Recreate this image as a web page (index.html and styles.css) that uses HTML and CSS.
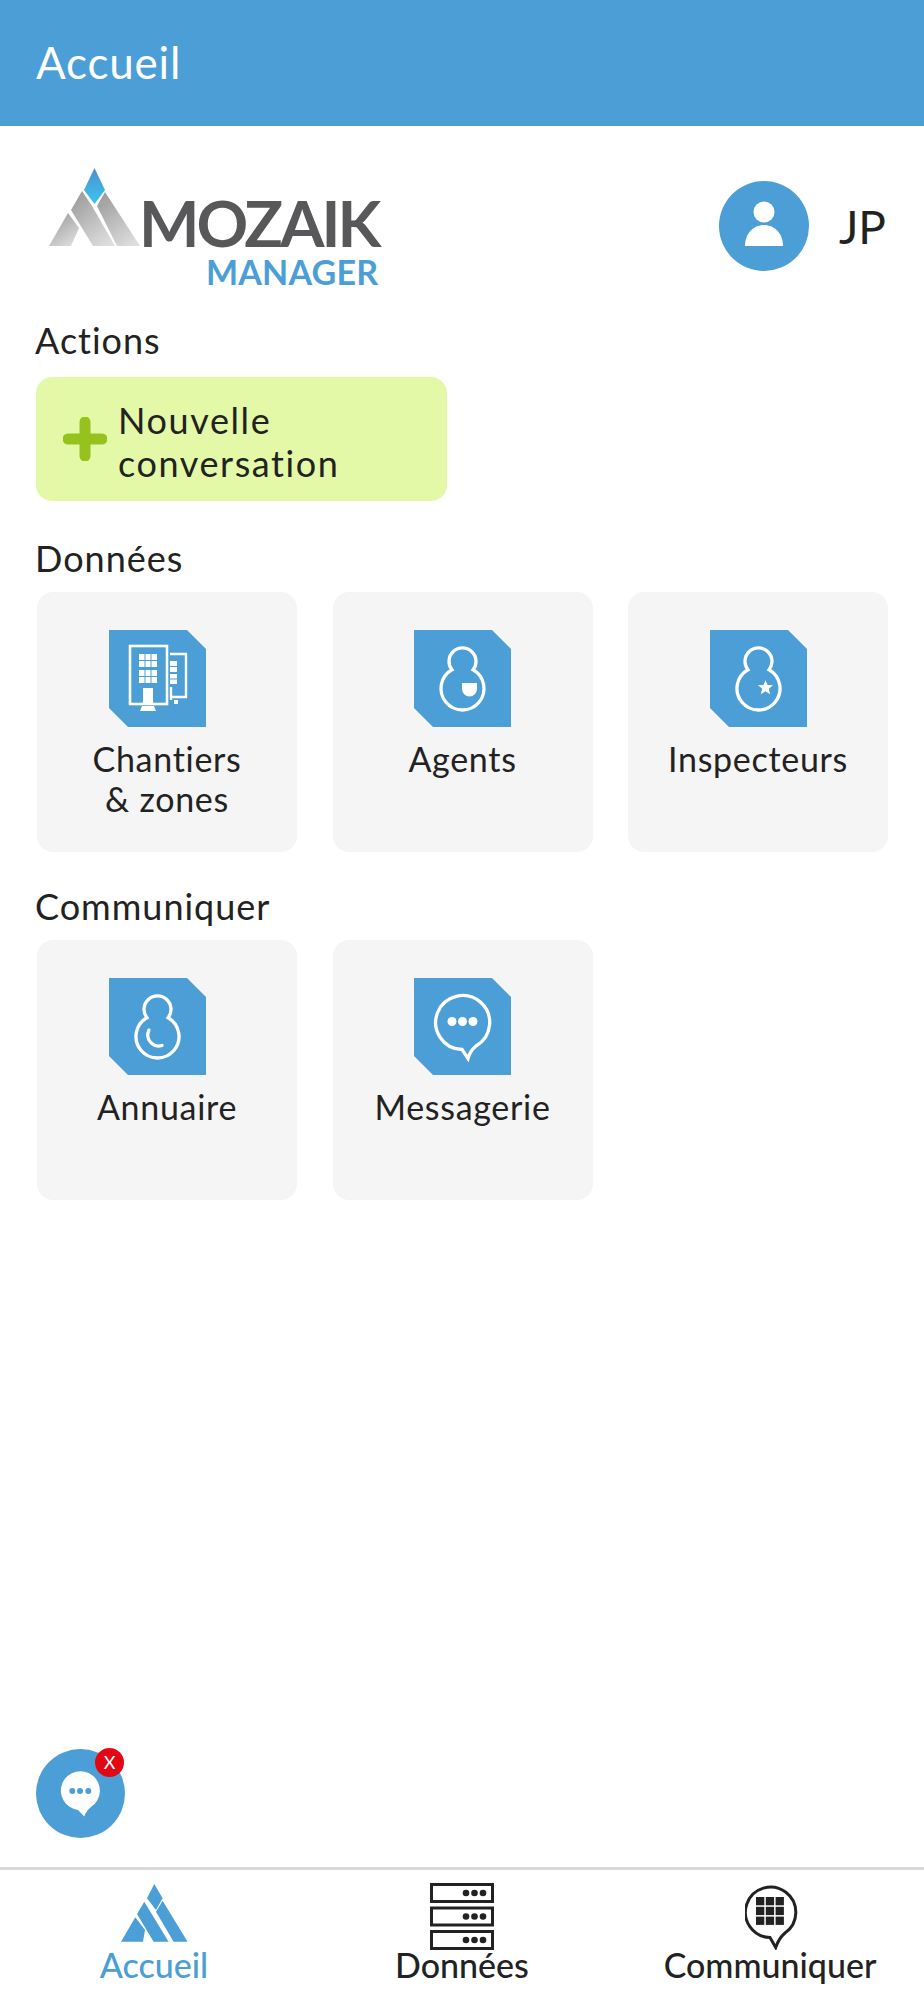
FILE: index.html
```html
<!DOCTYPE html>
<html lang="fr">
<head>
	<title>Accueil</title>
	<meta charset="utf-8">
	<link rel="stylesheet" href="styles.css">
</head>
<body>
	<header class="topbar">Accueil</header>
	<main class="content">
		<div class="brand">
			<div class="logo">
				<svg class="logo-mark" viewBox="0 0 92 79">
					<defs>
						<linearGradient id="grey" x1="0.2" y1="0" x2="0.8" y2="1">
							<stop offset="0" stop-color="#9c9c9c"/>
							<stop offset="1" stop-color="#dedede"/>
						</linearGradient>
						<linearGradient id="drop" x1="0" y1="0" x2="0" y2="1">
							<stop offset="0" stop-color="#4a90d2"/>
							<stop offset="1" stop-color="#3cc4ee"/>
						</linearGradient>
					</defs>
					<polygon fill="url(#drop)" points="45.5,0 56,22 45.5,36 35,22"/>
					<polygon fill="url(#grey)" points="19,45 0,78 22,78 30,60"/>
					<polygon fill="url(#grey)" points="33,23 22,42 44,78 66,78 43,38"/>
					<polygon fill="url(#grey)" points="56,24 48,38 68,78 91,78"/>
				</svg>
				<div class="logo-words">
					<span class="logo-name">MOZAIK</span>
					<span class="logo-sub">MANAGER</span>
				</div>
			</div>
			<div class="user">
				<span class="avatar">
					<svg viewBox="0 0 90 90">
						<circle cx="45" cy="31" r="10.5" fill="#fff"/>
						<path d="M26 65 C26 53 34 44 45 44 C56 44 64 53 64 65 Z" fill="#fff"/>
					</svg>
				</span>
				<span class="initials">JP</span>
			</div>
		</div>

		<h2 class="section-title">Actions</h2>
		<a class="action-card">
			<svg class="plus" viewBox="0 0 44 44">
				<path d="M22 5 V39 M5 22 H39" stroke="#97c11d" stroke-width="11" stroke-linecap="round"/>
			</svg>
			<span class="action-text">Nouvelle<br>conversation</span>
		</a>

		<h2 class="section-title">Données</h2>
		<div class="tiles">
			<a class="tile">
				<svg class="tile-icon" viewBox="0 0 97 97">
					<polygon class="tile-bg" points="0,0 78,0 97,19 97,97 19,97 0,78"/>
					<rect x="21" y="16" width="37" height="58" fill="none" stroke="#fff" stroke-width="2.6"/>
					<rect x="30" y="24" width="18" height="13" fill="#fff"/>
					<rect x="30" y="40" width="18" height="13" fill="#fff"/>
					<path d="M36 24 V53 M42 24 V53 M30 30.5 H48 M30 46.500 H48" stroke="#4b9ed6" stroke-width="1"/>
					<rect x="34" y="58" width="10" height="16" fill="#fff"/>
					<polygon points="33,76 45,76 47,81 31,81" fill="#fff"/>
					<path d="M61 24 H77 V67 H62" fill="none" stroke="#fff" stroke-width="2.4"/>
					<path d="M62 57 V70" stroke="#fff" stroke-width="2.4"/>
					<rect x="61" y="31" width="7" height="11" fill="#fff"/>
					<rect x="61" y="44" width="7" height="10" fill="#fff"/>
					<path d="M61 36.500 H68 M61 49 H68" stroke="#4b9ed6" stroke-width="1"/>
					<rect x="65" y="70" width="4" height="4" fill="#fff"/>
				</svg>
				<span>Chantiers<br>&amp; zones</span>
			</a>
			<a class="tile">
				<svg class="tile-icon" viewBox="0 0 97 97">
					<polygon class="tile-bg" points="0,0 78,0 97,19 97,97 19,97 0,78"/>
					<path class="figure" d="M37.900 39.800 A13.500 13.500 0 1 1 59.100 39.800 A21.500 21.500 0 1 1 37.900 39.800 Z"/>
					<path d="M48 53 H63 V59 A7.500 7.500 0 0 1 48 59 Z" fill="#fff"/>
				</svg>
				<span>Agents</span>
			</a>
			<a class="tile">
				<svg class="tile-icon" viewBox="0 0 97 97">
					<polygon class="tile-bg" points="0,0 78,0 97,19 97,97 19,97 0,78"/>
					<path class="figure" d="M37.900 39.800 A13.500 13.500 0 1 1 59.100 39.800 A21.500 21.500 0 1 1 37.900 39.800 Z"/>
					<polygon fill="#fff" points="55.500,50 57.500,55 63,55.300 58.800,58.800 60.200,64.200 55.500,61.200 50.800,64.200 52.200,58.800 48,55.300 53.500,55"/>
				</svg>
				<span>Inspecteurs</span>
			</a>
		</div>

		<h2 class="section-title">Communiquer</h2>
		<div class="tiles">
			<a class="tile">
				<svg class="tile-icon" viewBox="0 0 97 97">
					<polygon class="tile-bg" points="0,0 78,0 97,19 97,97 19,97 0,78"/>
					<path class="figure" d="M37.900 39.800 A13.500 13.500 0 1 1 59.100 39.800 A21.500 21.500 0 1 1 37.900 39.800 Z"/>
					<path class="figure" stroke-linecap="round" d="M40 52 A11 11 0 0 0 53 67.500"/>
				</svg>
				<span>Annuaire</span>
			</a>
			<a class="tile">
				<svg class="tile-icon" viewBox="0 0 97 97">
					<polygon class="tile-bg" points="0,0 78,0 97,19 97,97 19,97 0,78"/>
					<path class="figure" d="M48 71.500 L54 80.500 Q56 73 62 68 A27 27 0 1 0 48 71.500 Z"/>
					<circle cx="38" cy="43.500" r="4.500" fill="#fff"/>
					<circle cx="48.500" cy="43.500" r="4.500" fill="#fff"/>
					<circle cx="59" cy="43.500" r="4.500" fill="#fff"/>
				</svg>
				<span>Messagerie</span>
			</a>
		</div>

		<a class="chat-button">
			<svg viewBox="0 0 89 89">
				<path d="M42 61 L48.300 67.500 Q50 62 55 58 A19.500 19.500 0 1 0 42 61 Z" fill="#fff"/>
				<circle cx="36.300" cy="42" r="3" fill="#4b9ed6"/>
				<circle cx="44" cy="42" r="3" fill="#4b9ed6"/>
				<circle cx="52.300" cy="42" r="3" fill="#4b9ed6"/>
			</svg>
			<span class="chat-badge">X</span>
		</a>
	</main>

	<nav class="tabbar">
		<a class="tab tab-active">
			<svg class="tab-icon home-icon" viewBox="0 0 67 58">
				<polygon points="33.300,0 41.600,14.300 35,26 26,14.300"/>
				<polygon points="23.300,17.700 16,30 32.600,57.700 47.600,57.700"/>
				<polygon points="41.600,16.700 35,27.700 52.600,57.700 66.600,57.700"/>
				<polygon points="14.300,33.300 0,57.700 22,57.700 24,46"/>
			</svg>
			<span>Accueil</span>
		</a>
		<a class="tab">
			<svg class="tab-icon" width="64" height="67" viewBox="0 0 64 67">
				<g fill="none" stroke="#222" stroke-width="3">
					<rect x="1.500" y="1.500" width="61" height="17"/>
					<rect x="1.500" y="25" width="61" height="17"/>
					<rect x="1.500" y="48.500" width="61" height="17"/>
				</g>
				<g fill="#222">
					<circle cx="36" cy="10" r="3.300"/><circle cx="44.500" cy="10" r="3.300"/><circle cx="53" cy="10" r="3.300"/>
					<circle cx="36" cy="33.500" r="3.300"/><circle cx="44.500" cy="33.500" r="3.300"/><circle cx="53" cy="33.500" r="3.300"/>
					<circle cx="36" cy="57" r="3.300"/><circle cx="44.500" cy="57" r="3.300"/><circle cx="53" cy="57" r="3.300"/>
				</g>
			</svg>
			<span>Données</span>
		</a>
		<a class="tab">
			<svg class="tab-icon tab-icon-bubble" width="54" height="67" viewBox="0 0 54 67">
				<path d="M25 54.500 L30.700 64.500 Q34 55 40 50 A25.200 25.200 0 1 0 25 54.500 Z" fill="none" stroke="#222" stroke-width="3"/>
				<g fill="#222">
					<rect x="11" y="14" width="8.300" height="8.300"/><rect x="20.800" y="14" width="8.300" height="8.300"/><rect x="30.600" y="14" width="8.300" height="8.300"/>
					<rect x="11" y="23.800" width="8.300" height="8.300"/><rect x="20.800" y="23.800" width="8.300" height="8.300"/><rect x="30.600" y="23.800" width="8.300" height="8.300"/>
					<rect x="11" y="33.600" width="8.300" height="8.300"/><rect x="20.800" y="33.600" width="8.300" height="8.300"/><rect x="30.600" y="33.600" width="8.300" height="8.300"/>
				</g>
			</svg>
			<span>Communiquer</span>
		</a>
	</nav>
</body>
</html>
```

FILE: styles.css
```css
:root{
	--blue: #4b9ed6;
	--ink: #222;
}
*{
	margin: 0;
	padding: 0;
	box-sizing: border-box;
}
body{
	display: flex;
	flex-direction: column;
	min-height: 2000px;
	background: #fff;
	color: var(--ink);
	font-family: 'Lato', sans-serif;
}
.topbar{
	height: 126px;
	padding: 0 36px 3px;
	display: flex;
	align-items: center;
	background: var(--blue);
	color: #fff;
	font-size: 44px;
	letter-spacing: 0.8px;
}
.content{
	flex: 1;
	position: relative;
	padding: 42px 36px 0;
}
.brand{
	display: flex;
	justify-content: space-between;
	height: 152px;
}
.logo{
	display: flex;
	align-items: flex-start;
	margin-left: 13px;
}
.logo-mark{
	width: 92px;
	height: 79px;
	flex: none;
}
.logo-words{
	display: flex;
	flex-direction: column;
	align-items: flex-end;
	margin-top: 23px;
	margin-left: -2px;
}
.logo-name{
	font-size: 64px;
	line-height: 64px;
	font-weight: 700;
	letter-spacing: -3px;
	color: #58585a;
}
.logo-sub{
	font-size: 34px;
	line-height: 34px;
	font-weight: 700;
	letter-spacing: 0.2px;
	color: var(--blue);
}
.user{
	display: flex;
	align-items: center;
	height: 90px;
	margin-top: 13px;
	margin-right: 2px;
}
.avatar{
	width: 90px;
	height: 90px;
	border-radius: 50%;
	background: var(--blue);
	margin-right: 30px;
}
.avatar svg{
	display: block;
}
.initials{
	font-size: 46px;
}
.section-title{
	margin-left: -1px;
	font-size: 36px;
	line-height: 40px;
	font-weight: 400;
	letter-spacing: 1px;
}
.action-card{
	width: 411px;
	height: 124px;
	margin-top: 17px;
	margin-bottom: 37px;
	padding-left: 27px;
	display: flex;
	align-items: center;
	gap: 11px;
	border-radius: 16px;
	background: #e4f9a8;
	font-size: 36px;
	line-height: 43px;
	letter-spacing: 1.6px;
}
.action-text{
	padding-top: 5px;
}
.plus{
	width: 44px;
	height: 44px;
	flex: none;
}
.tiles{
	display: grid;
	grid-template-columns: repeat(3, 260px);
	gap: 35.5px;
	margin: 14px 0 34px 1px;
}
.tile{
	height: 260px;
	padding-top: 38px;
	display: flex;
	flex-direction: column;
	align-items: center;
	border-radius: 16px;
	background: #f5f5f5;
	font-size: 34px;
	line-height: 40px;
	letter-spacing: 0.7px;
	text-align: center;
}
.tile-icon{
	width: 97px;
	height: 97px;
	margin-bottom: 12px;
	flex: none;
}
.tile:first-child .tile-icon{
	margin-right: 20px;
}
.tile-bg{
	fill: var(--blue);
}
.figure{
	fill: none;
	stroke: #fff;
	stroke-width: 3.3;
}
.chat-button{
	position: absolute;
	left: 36px;
	bottom: 29px;
	width: 89px;
	height: 89px;
	border-radius: 50%;
	background: var(--blue);
}
.chat-button svg{
	display: block;
}
.chat-badge{
	position: absolute;
	top: -1px;
	left: 59px;
	width: 29px;
	height: 29px;
	border-radius: 50%;
	background: #e30613;
	color: #fff;
	font-size: 18px;
	line-height: 29px;
	text-align: center;
}
.tabbar{
	height: 133px;
	display: grid;
	grid-template-columns: repeat(3, 308px);
	border-top: 3px solid #d9d9d9;
}
.tab{
	display: flex;
	flex-direction: column;
	align-items: center;
	padding-top: 13px;
	font-size: 34px;
	font-weight: 500;
	line-height: 40px;
}
.tab-icon{
	height: 67px;
	flex: none;
	margin-bottom: -5px;
}
.tab-icon-bubble{
	margin-left: 3px;
}
.tab-active{
	color: var(--blue);
}
.home-icon{
	width: 67px;
	height: 58px;
	margin-top: 1px;
	margin-bottom: 3px;
	fill: var(--blue);
}
```
